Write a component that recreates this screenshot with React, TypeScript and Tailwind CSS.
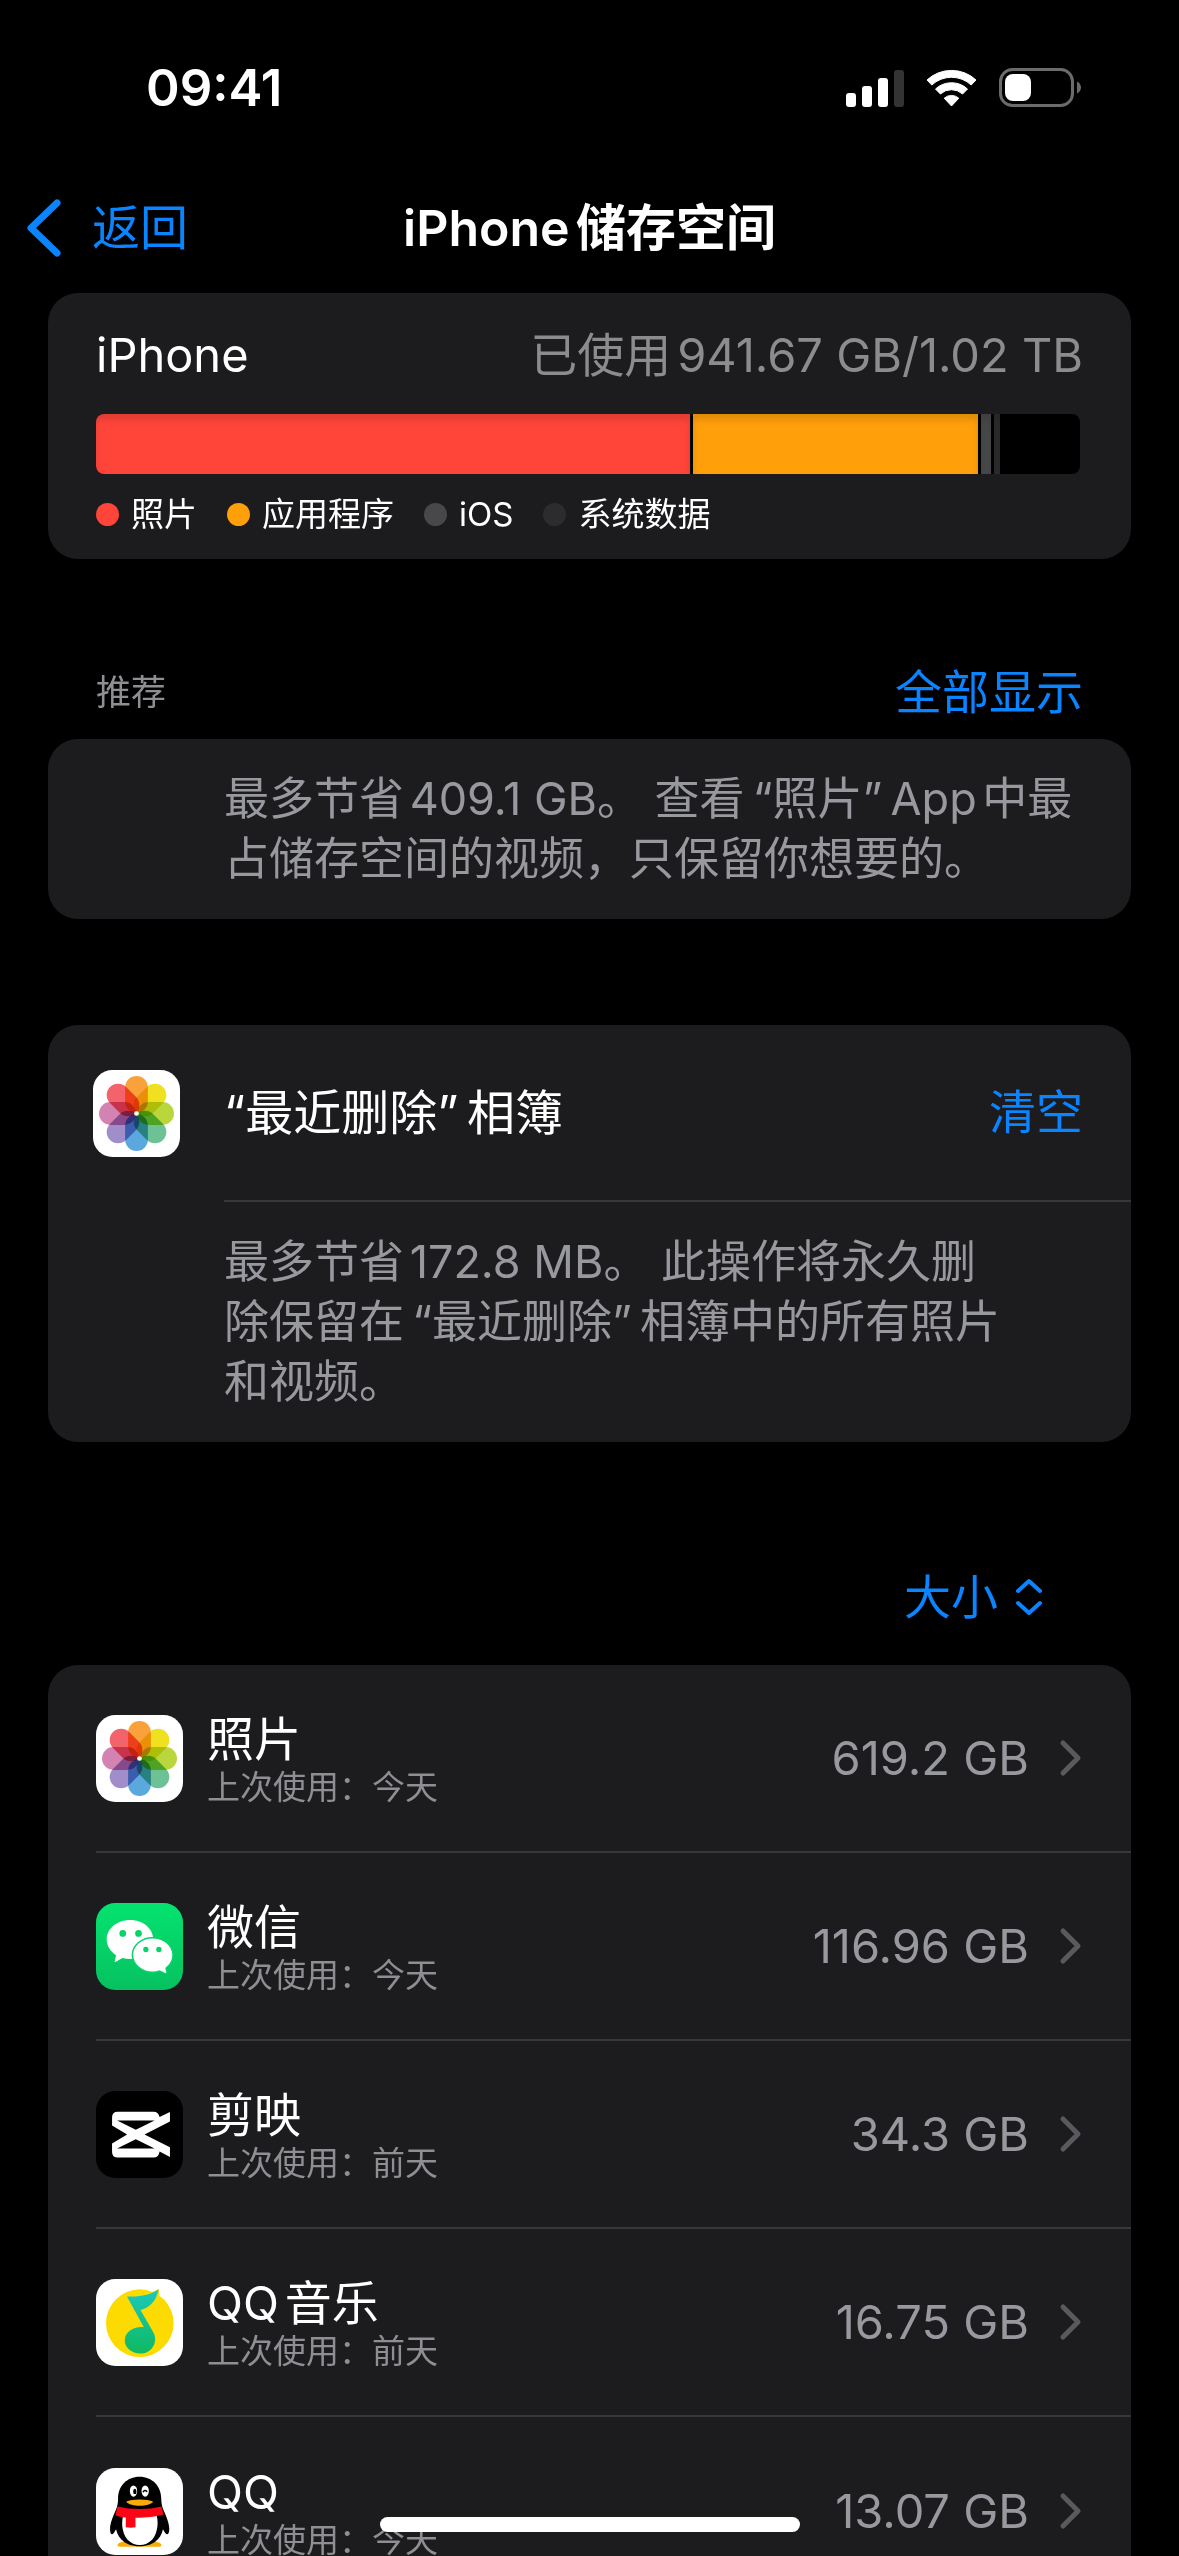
import React, { useState } from 'react';

interface Segment {
  label: string;
  share: number;
  fill: string;
}

interface AppUsage {
  name: string;
  lastUsed: string;
  size: string;
  icon: React.ReactNode;
}

const TOTAL_SHARE = 984;

const segments: Segment[] = [
  { label: '照片', share: 597, fill: 'bg-[#ff453a]' },
  { label: '应用程序', share: 288, fill: 'bg-[#ff9f0a]' },
  { label: 'iOS', share: 13, fill: 'bg-[#48484a]' },
  { label: '系统数据', share: 9, fill: 'bg-[#2c2c2e]' },
];

const petals = ['#f9a23b', '#efe120', '#b9d63d', '#6cc295', '#5ba8de', '#a18dc9', '#d283b2', '#f3636b'];

function PhotosIcon() {
  return (
    <svg viewBox="0 0 260 260" className="size-[87px] shrink-0" aria-hidden="true">
      <rect width="260" height="260" rx="58" fill="#fff" />
      <g transform="translate(130 130)" className="isolate">
        {petals.map((color, i) => (
          <rect
            key={color}
            x="-34"
            y="-112"
            width="68"
            height="110"
            rx="34"
            fill={color}
            transform={`rotate(${i * 45})`}
            className="mix-blend-multiply"
          />
        ))}
        <circle r="7" fill="#fff" />
      </g>
    </svg>
  );
}

function WeChatIcon() {
  return (
    <svg viewBox="48 42 260 260" className="size-[87px] shrink-0" aria-hidden="true">
      <defs>
        <linearGradient id="wechat" x1="0" y1="0" x2="0" y2="1">
          <stop offset="0" stopColor="#04e36f" />
          <stop offset="1" stopColor="#06c160" />
        </linearGradient>
      </defs>
      <rect x="48" y="42" width="260" height="260" rx="58" fill="url(#wechat)" />
      <path
        d="M150 93c38 0 69 25 69 58s-31 58-69 58c-8 0-16-1-23-3l-21 12c-2 1-3 0-2-2l4-18c-17-11-28-28-28-47 0-33 32-58 70-58z"
        fill="#fff"
      />
      <path
        d="M217 148c33 0 59 22 59 49 0 16-8 30-21 39l3 13c0 2-1 3-3 2l-17-8c-7 2-14 4-21 4-32 0-58-23-58-50s26-49 58-49z"
        fill="#fff"
        stroke="#05d368"
        strokeWidth="9"
        paintOrder="stroke"
      />
      <circle cx="128" cy="133" r="10" fill="#05d368" />
      <circle cx="175" cy="133" r="10" fill="#05d368" />
      <circle cx="197" cy="181" r="8" fill="#05d368" />
      <circle cx="236" cy="181" r="8" fill="#05d368" />
    </svg>
  );
}

function CapCutIcon() {
  return (
    <svg viewBox="48 36 260 260" className="size-[87px] shrink-0" aria-hidden="true">
      <rect x="48" y="36" width="260" height="260" rx="58" fill="#000" />
      <path
        fillRule="evenodd"
        fill="#fff"
        d="M96 115Q96 98 113 98H220Q234 98 238 114L269 99V127L193 166L269 204V233L238 217Q236 235 220 235H113Q96 235 96 218V193L141 166L96 139ZM111 124L167 152L223 124ZM111 208L167 180L223 208Z"
      />
    </svg>
  );
}

function QQMusicIcon() {
  return (
    <svg viewBox="48 45 260 260" className="size-[87px] shrink-0" aria-hidden="true">
      <defs>
        <linearGradient id="qqmusic" x1="0" y1="0" x2="0" y2="1">
          <stop offset="0" stopColor="#1cc9bd" />
          <stop offset="1" stopColor="#0fb961" />
        </linearGradient>
      </defs>
      <rect x="48" y="45" width="260" height="260" rx="58" fill="#fff" />
      <circle cx="179" cy="177" r="101" fill="#fedb00" />
      <path d="M215 84L236 76L238 100L226 112Z" fill="#fedb00" />
      <path
        fill="url(#qqmusic)"
        d="M141 97C175 99 212 94 235 75C230 109 208 132 181 138L221 207C234 238 212 268 180 268C155 268 134 251 134 229C134 203 160 186 191 189L143 102C142 100 141 99 141 97Z"
      />
    </svg>
  );
}

function QQIcon() {
  return (
    <svg viewBox="48 39 260 260" className="size-[87px] shrink-0" aria-hidden="true">
      <rect x="48" y="39" width="260" height="260" rx="58" fill="#fff" />
      <path d="M112 270q0-10 32-12h68q32 2 32 12 0 4-8 4h-116q-8 0-8-4z" fill="#faab07" />
      <path
        fill="#000"
        d="M178 65c38 0 65 28 65 66 0 12 2 22 6 32 10 22 18 42 18 58 0 10-3 16-6 16-4 0-8-6-13-15-5 30-32 51-70 51s-64-21-70-51c-5 9-9 15-12 15-4 0-6-6-6-16 0-16 8-36 18-58 4-10 6-20 6-32 0-38 26-66 64-66z"
      />
      <path d="M129 180h100c4 14 4 30 1 42-5 28-24 47-51 47s-46-19-51-47c-3-12-2-28 1-42z" fill="#fff" />
      <path d="M112 154c40 10 92 10 132 0l6 24c-22 6-52 10-84 10v28c-9 2-19 2-29 0v-29c-12-1-22-3-31-7z" fill="#fb0516" />
      <ellipse cx="160" cy="108" rx="11" ry="17" fill="#fff" />
      <ellipse cx="195" cy="108" rx="11" ry="17" fill="#fff" />
      <ellipse cx="164" cy="109" rx="5" ry="8" fill="#000" />
      <path d="M189 110q5-7 11-1" stroke="#000" strokeWidth="4" strokeLinecap="round" fill="none" />
      <path d="M138 140c16-9 64-9 81 0-14 16-67 16-81 0z" fill="#faab07" />
    </svg>
  );
}

const apps: AppUsage[] = [
  { name: '照片', lastUsed: '今天', size: '619.2 GB', icon: <PhotosIcon /> },
  { name: '微信', lastUsed: '今天', size: '116.96 GB', icon: <WeChatIcon /> },
  { name: '剪映', lastUsed: '前天', size: '34.3 GB', icon: <CapCutIcon /> },
  { name: 'QQ音乐', lastUsed: '前天', size: '16.75 GB', icon: <QQMusicIcon /> },
  { name: 'QQ', lastUsed: '今天', size: '13.07 GB', icon: <QQIcon /> },
];

function StatusBar() {
  return (
    <div className="flex items-center justify-between pt-[60px] pr-[98px] pl-[146px]">
      <time className="text-[51px] leading-[56px] font-semibold">09:41</time>
      <div className="flex items-center gap-[22px]">
        <svg width="58" height="38" viewBox="0 0 58 38" aria-hidden="true">
          <rect x="0" y="24" width="10" height="14" rx="3" fill="#fff" />
          <rect x="16" y="17" width="10" height="21" rx="3" fill="#fff" />
          <rect x="32" y="9" width="10" height="29" rx="3" fill="#fff" />
          <rect x="48" y="1" width="10" height="37" rx="3" fill="#333" />
        </svg>
        <svg width="51" height="38" viewBox="0 0 51 38" aria-hidden="true" fill="#fff" stroke="#fff" strokeWidth="1" strokeLinejoin="round">
          <path d="M1 11A36 36 0 0 1 50 11L45.200 16A29 29 0 0 0 5.800 16z" />
          <path d="M9.500 20A23.500 23.500 0 0 1 41.500 20L36.600 25A16.500 16.500 0 0 0 14.400 25z" />
          <path d="M18.200 29.200A11 11 0 0 1 32.800 29.200L25.500 37z" />
        </svg>
        <svg width="82" height="40" viewBox="0 0 82 40" aria-hidden="true">
          <rect x="1.500" y="1.500" width="72" height="36" rx="12" fill="none" stroke="#6b6b6b" strokeWidth="3" />
          <rect x="6" y="6" width="26" height="27" rx="8" fill="#fff" />
          <path d="M78 13.500c2.500 1 4 3.500 4 6s-1.500 5-4 6z" fill="#6b6b6b" />
        </svg>
      </div>
    </div>
  );
}

function UsageCard() {
  return (
    <section className="mx-12 rounded-[30px] bg-[#1c1c1e] px-12 pt-8 pb-[21px]">
      <div className="flex items-center justify-between text-[47px] leading-[60px]">
        <h2>iPhone</h2>
        <p className="text-[#8c8c8e]">已使用941.67 GB/1.02 TB</p>
      </div>
      <div className="mt-[29px] mr-[3px] flex h-[60px] overflow-hidden rounded-lg bg-black">
        {segments.map((segment) => (
          <div
            key={segment.label}
            className={`border-r-[3px] border-black shadow-[inset_0_6px_6px_rgba(0,0,0,0.12)] ${segment.fill}`}
            style={{ width: `${(segment.share / TOTAL_SHARE) * 100}%` }}
          />
        ))}
      </div>
      <ul className="mt-4 flex gap-[30px] text-[33px] leading-[48px]">
        {segments.map((segment) => (
          <li key={segment.label} className="flex items-center gap-3">
            <span className={`size-[23px] rounded-full ${segment.fill}`} />
            {segment.label}
          </li>
        ))}
      </ul>
    </section>
  );
}

function AppRow({ app }: { app: AppUsage }) {
  return (
    <li className="group ml-12">
      <a
        href="#"
        className="flex h-[188px] items-center gap-6 border-b-2 border-[#38383a] pr-12 group-last:border-b-0"
      >
        {app.icon}
        <div className="flex-1 pt-1">
          <h3 className="text-[47px] leading-[54px]">{app.name}</h3>
          <p className="text-[33px] leading-[42px] text-[#8e8e93]">上次使用：{app.lastUsed}</p>
        </div>
        <span className="text-[47px] leading-[60px] text-[#98989f]">{app.size}</span>
        <svg width="30" height="40" viewBox="0 0 30 40" aria-hidden="true">
          <path d="M10 5l15 15-15 15" fill="none" stroke="#5a5a5e" strokeWidth="5" strokeLinecap="round" strokeLinejoin="round" />
        </svg>
      </a>
    </li>
  );
}

export default function App() {
  const [descending, setDescending] = useState(true);
  const rows = descending ? apps : [...apps].reverse();

  return (
    <div
      lang="zh-CN"
      className="relative h-screen overflow-hidden bg-black font-['Inter','Noto_Sans_CJK_SC',sans-serif] text-white [text-autospace:normal]"
    >
      <StatusBar />

      <header className="mt-[68px] grid grid-cols-[1fr_auto_1fr] items-center px-6 pb-[21px]">
        <button type="button" className="flex items-center gap-7 justify-self-start text-[48px] leading-[88px] text-[#0a84ff]">
          <svg width="40" height="60" viewBox="0 0 40 60" aria-hidden="true">
            <path d="M33 5L7 30l26 25" fill="none" stroke="#0a84ff" strokeWidth="7" strokeLinecap="round" strokeLinejoin="round" />
          </svg>
          返回
        </button>
        <h1 className="text-[50px] leading-[88px] font-semibold">iPhone储存空间</h1>
      </header>

      <main>
        <UsageCard />

        <div className="mx-24 mt-[97px] flex items-center justify-between pb-[11px]">
          <h2 className="text-[35px] leading-[48px] text-[#8e8e93]">推荐</h2>
          <button type="button" className="text-[47px] leading-[72px] text-[#0a84ff]">全部显示</button>
        </div>

        <section className="mx-12 rounded-[30px] bg-[#1c1c1e] py-[30px] pr-12 pl-44">
          <p className="text-[45px] leading-[60px] text-[#98989f]">
            最多节省409.1 GB。 查看&thinsp;“照片”&thinsp;App中最
            <br />
            占储存空间的视频，只保留你想要的。
          </p>
        </section>

        <section className="mx-12 mt-[106px] rounded-[30px] bg-[#1c1c1e]">
          <div className="flex items-center pl-[45px]">
            <PhotosIcon />
            <div className="ml-11 flex h-[177px] flex-1 items-center justify-between border-b-2 border-[#38383a] pr-12">
              <h3 className="text-[48px]">“最近删除”&thinsp;相簿</h3>
              <button type="button" className="text-[47px] text-[#0a84ff]">清空</button>
            </div>
          </div>
          <p className="py-[30px] pr-12 pl-44 text-[45px] leading-[60px] text-[#98989f]">
            最多节省172.8 MB。 此操作将永久删
            <br />
            除保留在&thinsp;“最近删除”&thinsp;相簿中的所有照片
            <br />
            和视频。
          </p>
        </section>

        <div className="mt-[119px] flex justify-end pr-[135px] pb-8">
          <button
            type="button"
            onClick={() => setDescending(!descending)}
            className="flex items-center gap-4 text-[47px] leading-[72px] text-[#0a84ff]"
          >
            大小
            <svg width="30" height="40" viewBox="0 0 30 40" aria-hidden="true">
              <path d="M4 14L15 4l11 10M4 26l11 10 11-10" fill="none" stroke="#0a84ff" strokeWidth="4" strokeLinecap="round" strokeLinejoin="round" />
            </svg>
          </button>
        </div>

        <ul className="mx-12 rounded-t-[30px] bg-[#1c1c1e]">
          {rows.map((app) => (
            <AppRow key={app.name} app={app} />
          ))}
        </ul>
      </main>

      <div className="absolute bottom-6 left-1/2 h-[15px] w-[420px] -translate-x-1/2 rounded-full bg-white" />
    </div>
  );
}
